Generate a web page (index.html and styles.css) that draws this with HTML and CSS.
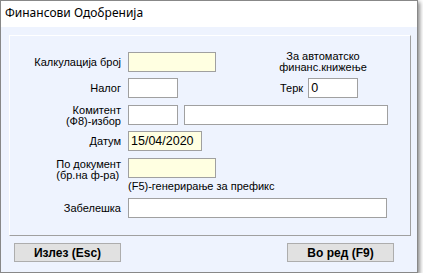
FILE: index.html
```html
<!DOCTYPE html>
<html lang="mk">
<head>
    <meta charset="UTF-8">
    <title>Финансови Одобренија</title>
    <link rel="stylesheet" href="styles.css">
</head>
<body>
    <div class="window">
        <div class="title-bar">Финансови Одобренија</div>
        <div class="content">
            <div class="group">
                <div class="row">
                    <label class="lbl" for="kalk">Калкулација број</label>
                    <input type="text" id="kalk" class="yellow w88">
                    <div class="auto-note">За автоматско<br>финанс.книжење</div>
                </div>
                <div class="row gap7">
                    <label class="lbl" for="nalog">Налог</label>
                    <input type="text" id="nalog" class="w50">
                    <label class="terk-lbl" for="terk">Терк</label>
                    <input type="text" id="terk" class="w50" value="0">
                </div>
                <div class="row">
                    <label class="lbl two-line" for="komitent">Комитент<br>(Ф8)-избор</label>
                    <input type="text" id="komitent" class="w50">
                    <input type="text" class="w204 ml6">
                </div>
                <div class="row gap7">
                    <label class="lbl" for="datum">Датум</label>
                    <input type="text" id="datum" class="yellow w74" value="15/04/2020">
                </div>
                <div class="row tall">
                    <label class="lbl doc" for="dokument"><span>По документ<br>(бр.на ф-ра)</span></label>
                    <input type="text" id="dokument" class="yellow w88">
                </div>
                <div class="hint">(F5)-генерирање за префикс</div>
                <div class="row last">
                    <label class="lbl" for="zabeleska">Забелешка</label>
                    <input type="text" id="zabeleska" class="w259">
                </div>
            </div>
            <div class="buttons">
                <button type="button">Излез (Esc)</button>
                <button type="button">Во ред (F9)</button>
            </div>
        </div>
    </div>
</body>
</html>
```

FILE: styles.css
```css
/* Estilo global */
* {
    margin: 0;
    padding: 0;
    box-sizing: border-box;
}

body {
    font-family: "Liberation Sans", Arial, sans-serif;
    font-size: 11px;
    color: #000;
    background-color: #fff;
}

/* Ventana */
.window {
    width: 418px;
    height: 273px;
    border: 1px solid #888;
    background-color: #eef3fe;
    box-shadow: 2px 2px 4px rgba(0, 0, 0, 0.45);
}

.title-bar {
    height: 26px;
    background-color: #fff;
    font-family: "Noto Sans", sans-serif;
    font-size: 12px;
    padding: 4px 0 0 4px;
    line-height: 16px;
}

.content {
    padding: 8px 6px 0 8px;
}

/* Grupo de campos */
.group {
    height: 201px;
    border: 1px solid #a0a0a0;
    border-top-color: #fff;
    border-left-color: #fff;
    padding-top: 16px;
}

.row {
    display: flex;
    align-items: center;
    height: 20px;
    margin-bottom: 6px;
}

.row.gap7 {
    margin-bottom: 7px;
}

.row.tall {
    margin-bottom: 0;
    align-items: flex-start;
}

.lbl {
    width: 111px;
    margin-right: 7px;
    text-align: right;
    line-height: 11px;
}

.lbl.two-line {
    padding-top: 2px;
}

.lbl.doc {
    padding-top: 1px;
}

.lbl.doc span {
    display: inline-block;
    text-align: left;
    line-height: 11px;
}

input {
    height: 20px;
    border: 1px solid #a0a0a0;
    background-color: #fff;
    font-family: "Liberation Sans", Arial, sans-serif;
    font-size: 12.5px;
    padding: 0 2px;
    color: #000;
    outline: none;
}

input.yellow {
    background-color: #ffffe1;
}

.w50 { width: 50px; }
.w74 { width: 74px; }
.w88 { width: 88px; }
.w204 { width: 204px; }
.w259 { width: 259px; }
.ml6 { margin-left: 6px; }

.auto-note {
    margin-left: 57px;
    width: 100px;
    text-align: center;
    line-height: 11px;
}

.terk-lbl {
    margin-left: 102px;
    margin-right: 5px;
}

.hint {
    margin: 3px 0 6px 118px;
    line-height: 11px;
}

.row.last {
    margin-bottom: 0;
}

/* Botones */
.buttons {
    display: flex;
    justify-content: space-between;
    padding: 7px 17px 0 5px;
}

button {
    width: 107px;
    height: 19px;
    background-color: #e1e1e1;
    border: 1px solid #adadad;
    font-family: "Liberation Sans", Arial, sans-serif;
    font-size: 12px;
    font-weight: bold;
    color: #000;
}
```
